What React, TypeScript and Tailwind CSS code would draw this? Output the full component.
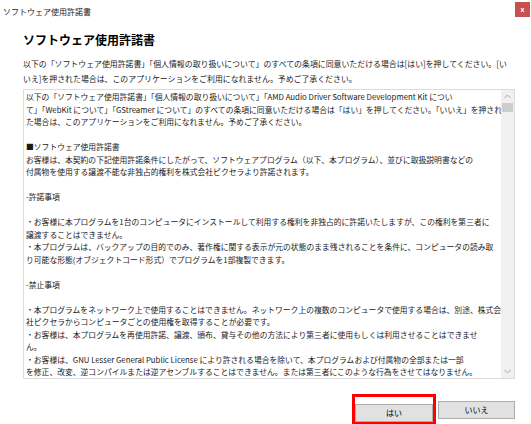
import React from 'react';

const FONT = { fontFamily: '"Noto Sans CJK JP", "Noto Sans", sans-serif' };

const INTRO = [
  '以下の「ソフトウェア使用許諾書」「個人情報の取り扱いについて」のすべての条項に同意いただける場合は[はい]を押してください。[い',
  'いえ]を押された場合は、このアプリケーションをご利用になれません。予めご了承ください。',
];

const LICENSE = [
  '以下の「ソフトウェア使用許諾書」「個人情報の取り扱いについて」「AMD Audio Driver Software Development Kit につい',
  'て」「WebKit について」「GStreamer について」のすべての条項に同意いただける場合は「はい」を押してください。「いいえ」を押され',
  'た場合は、このアプリケーションをご利用になれません。予めご了承ください。',
  '',
  '■ソフトウェア使用許諾書',
  'お客様は、本契約の下記使用許諾条件にしたがって、ソフトウェアプログラム（以下、本プログラム）、並びに取扱説明書などの',
  '付属物を使用する譲渡不能な非独占的権利を株式会社ピクセラより許諾されます。',
  '',
  '-許諾事項',
  '',
  '・お客様に本プログラムを1台のコンピュータにインストールして利用する権利を非独占的に許諾いたしますが、この権利を第三者に',
  '譲渡することはできません。',
  '・本プログラムは、バックアップの目的でのみ、著作権に関する表示が元の状態のまま残されることを条件に、コンピュータの読み取',
  'り可能な形態(オブジェクトコード形式）でプログラムを1部複製できます。',
  '',
  '-禁止事項',
  '',
  '・本プログラムをネットワーク上で使用することはできません。ネットワーク上の複数のコンピュータで使用する場合は、別途、株式会',
  '社ピクセラからコンピュータごとの使用権を取得することが必要です。',
  '・お客様は、本プログラムを再使用許諾、譲渡、頒布、貸与その他の方法により第三者に使用もしくは利用させることはできませ',
  'ん。',
  '・お客様は、GNU Lesser General Public License により許される場合を除いて、本プログラムおよび付属物の全部または一部',
  'を修正、改変、逆コンパイルまたは逆アセンブルすることはできません。または第三者にこのような行為をさせてはなりません。',
];

function Chevron({ up }: { up?: boolean }) {
  return (
    <svg width="7" height="5" viewBox="0 0 7 5" className="block">
      <path
        d={up ? 'M0.5 4 L3.5 1 L6.5 4' : 'M0.5 1 L3.5 4 L6.5 1'}
        fill="none"
        stroke="#a6a6a6"
        strokeWidth="1"
      />
    </svg>
  );
}

export default function App() {
  return (
    <div className="w-[531px] h-[424px] bg-white overflow-hidden text-[#1a1a1a]" style={FONT}>
      {/* title bar */}
      <div className="h-[22px] flex items-center justify-between pl-[3px] pr-[1px]">
        <span className="text-[8px] leading-none mt-[1px]">ソフトウェア使用許諾書</span>
        <button className="w-[15px] h-[15px] mt-[-3px] bg-[#c75050] flex items-center justify-center text-white text-[7px] font-bold leading-none">
          x
        </button>
      </div>

      <div className="pl-[23px] pr-[16px]">
        <h1 className="mt-[9px] text-[12px] leading-[18px] font-bold text-black">ソフトウェア使用許諾書</h1>

        <div className="mt-[7px] text-[7.9px] leading-[15px]">
          {INTRO.map((l, i) => (
            <div key={i} className="whitespace-nowrap">{l}</div>
          ))}
        </div>

        <div className="mt-[3px] h-[290px] border border-[#dcdcdc] flex overflow-hidden">
          <div className="flex-1 pl-[2px] pt-[1px] text-[7.8px] leading-[12.5px] overflow-hidden">
            {LICENSE.map((l, i) => (
              <div key={i} className="whitespace-nowrap h-[12.5px]">{l}</div>
            ))}
          </div>
          <div className="w-[13px] bg-[#f0f0f0] flex flex-col">
            <div className="h-[13px] flex items-center justify-center">
              <Chevron up />
            </div>
            <div className="h-[9px] mx-[1px] bg-[#cdcdcd]" />
            <div className="flex-1" />
            <div className="h-[13px] flex items-center justify-center">
              <Chevron />
            </div>
          </div>
        </div>

        <div className="mt-[15px] flex justify-end items-center">
          <div className="border-[3px] border-[#ff0000]">
            <button className="w-[78px] h-[18px] bg-[#e1e1e1] border border-[#adadad] text-[8px] leading-none text-black">
              はい
            </button>
          </div>
          <button className="ml-[2px] w-[77px] h-[18px] bg-[#e1e1e1] border border-[#adadad] text-[8px] leading-none text-black">
            いいえ
          </button>
        </div>
      </div>
    </div>
  );
}
